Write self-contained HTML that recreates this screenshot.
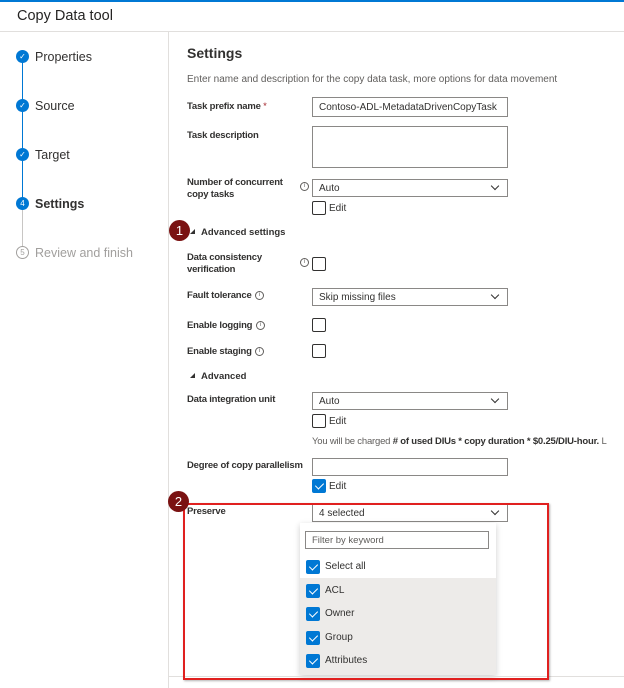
<!DOCTYPE html><html><head><style>
*{box-sizing:border-box;margin:0;padding:0}
body{width:624px;height:688px;background:#fff;font-family:"Liberation Sans",sans-serif;color:#323130;position:relative;overflow:hidden}
.a{position:absolute;white-space:nowrap}
.lbl{font-size:9.5px;font-weight:bold;color:#323130;line-height:12px;letter-spacing:-0.2px}
.inp{position:absolute;left:312px;width:196px;border:1px solid #8a8886;background:#fff;font-size:10px;padding-left:6px;color:#323130}
.sel::after{content:"";position:absolute;right:9px;top:3px;width:5px;height:5px;border-right:1px solid #323130;border-bottom:1px solid #323130;transform:rotate(45deg)}
.cb{position:absolute;width:14px;height:14px;border:1px solid #323130;border-radius:2px;background:#fff}
.cb.on{background:#0078d4;border-color:#0078d4}
.cb.on::after{content:"";position:absolute;left:4px;top:1px;width:4px;height:7px;border-right:1.3px solid #fff;border-bottom:1.3px solid #fff;transform:rotate(45deg)}
.info{position:absolute;width:9px;height:9px;border:1px solid #605e5c;border-radius:50%;font-size:6px;text-align:center;line-height:7px;color:#605e5c}
.step{position:absolute;left:16px;width:13px;height:13px;border-radius:50%;background:#0078d4;color:#fff;font-size:8px;text-align:center;line-height:13px}
.sl{position:absolute;left:35px;font-size:12.5px;color:#323130}
.badge{position:absolute;width:21px;height:21px;border-radius:50%;background:#7a1212;color:#fff;font-size:13px;text-align:center;line-height:21px}
.tri{position:absolute;width:0;height:0;border-left:5px solid transparent;border-bottom:5px solid #323130}
</style></head><body>
<div class="a" style="left:0;top:0;width:624px;height:2px;background:#0078d4"></div>
<div class="a" style="left:17px;top:8px;font-size:14.5px;color:#252423">Copy Data tool</div>
<div class="a" style="left:0;top:31px;width:624px;height:1px;background:#e1dfdd"></div>
<div class="a" style="left:168px;top:32px;width:1px;height:656px;background:#e1dfdd"></div>
<div class="a" style="left:22px;top:56px;width:1px;height:147px;background:#0078d4"></div>
<div class="a" style="left:22px;top:203px;width:1px;height:49px;background:#c8c6c4"></div>
<div class="step" style="top:50px">✓</div><div class="sl" style="top:50px">Properties</div>
<div class="step" style="top:99px">✓</div><div class="sl" style="top:99px">Source</div>
<div class="step" style="top:148px">✓</div><div class="sl" style="top:148px">Target</div>
<div class="step" style="top:197px">4</div><div class="sl" style="top:197px;font-weight:bold">Settings</div>
<div class="step" style="top:246px;background:#fff;border:1px solid #a19f9d;color:#a19f9d;line-height:11px">5</div><div class="sl" style="top:246px;color:#a19f9d">Review and finish</div>

<div class="a" style="left:187px;top:45px;font-size:14px;font-weight:bold;color:#323130">Settings</div>
<div class="a" style="left:187px;top:74px;font-size:10px;color:#605e5c">Enter name and description for the copy data task, more options for data movement</div>

<div class="a lbl" style="left:187px;top:101px">Task prefix name <span style="color:#a4262c;font-weight:normal">*</span></div>
<div class="inp" style="top:97px;height:20px;line-height:19px">Contoso-ADL-MetadataDrivenCopyTask</div>
<div class="a lbl" style="left:187px;top:130px">Task description</div>
<div class="inp" style="top:126px;height:42px"></div>
<div class="a lbl" style="left:187px;top:177px">Number of concurrent<br>copy tasks</div>
<div class="info" style="left:300px;top:182px">i</div>
<div class="inp sel" style="top:179px;height:18px;line-height:18px">Auto</div>
<div class="cb" style="left:312px;top:201px"></div><div class="a" style="left:329px;top:203px;font-size:10px">Edit</div>

<div class="badge" style="left:169px;top:220px">1</div>
<div class="tri" style="left:190px;top:229px"></div>
<div class="a" style="left:201px;top:227px;font-size:9.5px;font-weight:bold">Advanced settings</div>

<div class="a lbl" style="left:187px;top:252px">Data consistency<br>verification</div>
<div class="info" style="left:300px;top:258px">i</div>
<div class="cb" style="left:312px;top:257px"></div>
<div class="a lbl" style="left:187px;top:290px">Fault tolerance</div>
<div class="info" style="left:255px;top:291px">i</div>
<div class="inp sel" style="top:288px;height:18px;line-height:18px">Skip missing files</div>
<div class="a lbl" style="left:187px;top:320px">Enable logging</div>
<div class="info" style="left:256px;top:321px">i</div>
<div class="cb" style="left:312px;top:318px"></div>
<div class="a lbl" style="left:187px;top:346px">Enable staging</div>
<div class="info" style="left:255px;top:347px">i</div>
<div class="cb" style="left:312px;top:344px"></div>

<div class="tri" style="left:190px;top:373px"></div>
<div class="a" style="left:201px;top:371px;font-size:9.5px;font-weight:bold">Advanced</div>
<div class="a lbl" style="left:187px;top:394px">Data integration unit</div>
<div class="inp sel" style="top:392px;height:18px;line-height:18px">Auto</div>
<div class="cb" style="left:312px;top:414px"></div><div class="a" style="left:329px;top:416px;font-size:10px">Edit</div>
<div class="a" style="left:312px;top:436px;font-size:9.5px;color:#605e5c;letter-spacing:-0.2px">You will be charged <b style="color:#323130"># of used DIUs * copy duration * $0.25/DIU-hour.</b> L</div>
<div class="a lbl" style="left:187px;top:460px">Degree of copy parallelism</div>
<div class="inp" style="top:458px;height:18px"></div>
<div class="cb on" style="left:312px;top:479px"></div><div class="a" style="left:329px;top:481px;font-size:10px">Edit</div>

<div class="a lbl" style="left:187px;top:506px">Preserve</div>
<div class="inp sel" style="top:504px;height:18px;line-height:18px">4 selected</div>

<div class="a" style="left:300px;top:523px;width:196px;height:152px;background:#fff;box-shadow:0 2px 6px rgba(0,0,0,.2)">
<div class="a" style="left:5px;top:8px;width:184px;height:18px;border:1px solid #8a8886;font-size:9.5px;color:#605e5c;padding-left:6px;line-height:17px">Filter by keyword</div>
<div class="cb on" style="left:6px;top:37px"></div><div class="a" style="left:25px;top:38px;font-size:10px">Select all</div>
<div class="a" style="left:0;top:55px;width:196px;height:97px;background:#edebe9"></div>
<div class="cb on" style="left:6px;top:61px"></div><div class="a" style="left:25px;top:62px;font-size:10px">ACL</div>
<div class="cb on" style="left:6px;top:84px"></div><div class="a" style="left:25px;top:85px;font-size:10px">Owner</div>
<div class="cb on" style="left:6px;top:108px"></div><div class="a" style="left:25px;top:109px;font-size:10px">Group</div>
<div class="cb on" style="left:6px;top:131px"></div><div class="a" style="left:25px;top:132px;font-size:10px">Attributes</div>
</div>
<div class="a" style="left:169px;top:676px;width:455px;height:1px;background:#e1dfdd"></div>
<div class="a" style="left:183px;top:503px;width:366px;height:177px;border:2px solid #e0201f;box-shadow:1px 1px 2px rgba(0,0,0,.3)"></div>
<div class="badge" style="left:168px;top:491px">2</div>
</body></html>
